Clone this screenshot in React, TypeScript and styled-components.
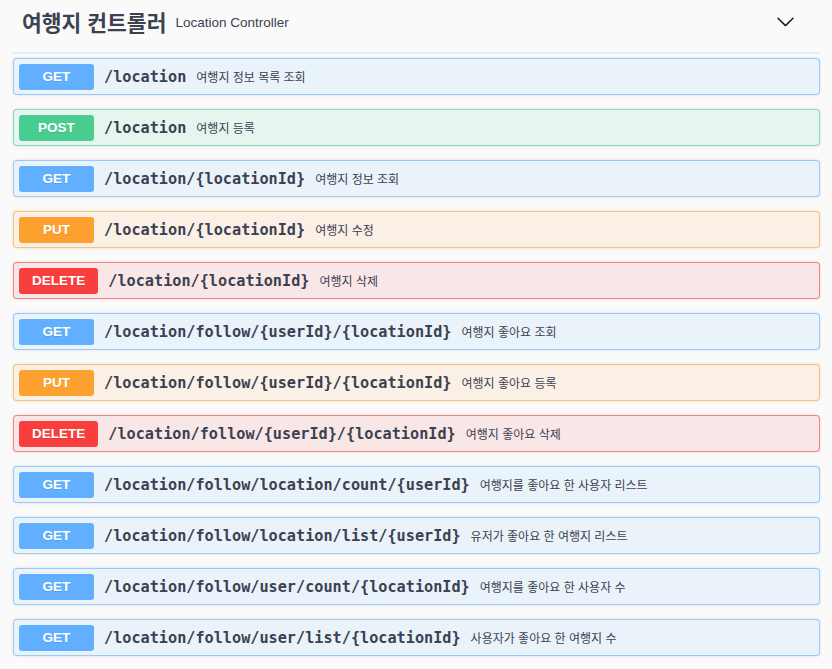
import React from "react";
import styled, { createGlobalStyle } from "styled-components";

const GlobalStyle = createGlobalStyle`
  html, body { margin: 0; padding: 0; background: #fafafa; }
  body { font-family: "Liberation Sans", "Noto Sans CJK KR", sans-serif; color: #3b4151; }
`;

type Method = "GET" | "POST" | "PUT" | "DELETE";

const COLORS: Record<Method, { main: string; bg: string; border: string }> = {
  GET: { main: "#61affe", bg: "rgba(97,175,254,.1)", border: "rgba(97,175,254,.6)" },
  POST: { main: "#49cc90", bg: "rgba(73,204,144,.1)", border: "rgba(73,204,144,.6)" },
  PUT: { main: "#fca130", bg: "rgba(252,161,48,.1)", border: "rgba(252,161,48,.6)" },
  DELETE: { main: "#f93e3e", bg: "rgba(249,62,62,.1)", border: "rgba(249,62,62,.6)" },
};

const Wrapper = styled.div`
  padding: 0 12px 0 13px;
`;

const TagHeader = styled.div`
  display: flex;
  align-items: center;
  box-sizing: border-box;
  height: 54px;
  padding: 0 25px 10px 9px;
  border-bottom: 2px solid #ebebeb;
  margin-bottom: 4px;
`;

const Title = styled.span`
  font-size: 21.5px;
  font-weight: 700;
  color: #3b4151;
`;

const Subtitle = styled.span`
  font-size: 13.5px;
  margin-left: 9px;
  margin-top: 3px;
  color: #3b4151;
`;

const Chevron = styled.svg`
  margin-left: auto;
  width: 19px;
  height: 19px;
  margin-top: 1px;
`;

const OpBlock = styled.div<{ $m: Method }>`
  box-sizing: border-box;
  height: 37px;
  margin-bottom: 14px;
  border: 1px solid ${(p) => COLORS[p.$m].border};
  background: ${(p) => COLORS[p.$m].bg};
  border-radius: 4px;
  box-shadow: 0 0 3px rgba(0, 0, 0, 0.12);
  display: flex;
  align-items: center;
  padding: 0 5px;
`;

const Badge = styled.span<{ $m: Method }>`
  box-sizing: border-box;
  height: 26px;
  min-width: 75px;
  padding: 0 13px;
  border-radius: 3px;
  background: ${(p) => COLORS[p.$m].main};
  color: #fff;
  font-size: 13.5px;
  font-weight: 700;
  text-shadow: 0 1px 0 rgba(0, 0, 0, 0.1);
  display: flex;
  align-items: center;
  justify-content: center;
`;

const Path = styled.span`
  font-family: "DejaVu Sans Mono", monospace;
  font-weight: 700;
  font-size: 15.2px;
  color: #3b4151;
  margin: 0 10px;
`;

const Desc = styled.span`
  font-size: 12px;
  color: #3b4151;
`;

const ops: { m: Method; path: string; desc: string }[] = [
  { m: "GET", path: "/location", desc: "여행지 정보 목록 조회" },
  { m: "POST", path: "/location", desc: "여행지 등록" },
  { m: "GET", path: "/location/{locationId}", desc: "여행지 정보 조회" },
  { m: "PUT", path: "/location/{locationId}", desc: "여행지 수정" },
  { m: "DELETE", path: "/location/{locationId}", desc: "여행지 삭제" },
  { m: "GET", path: "/location/follow/{userId}/{locationId}", desc: "여행지 좋아요 조회" },
  { m: "PUT", path: "/location/follow/{userId}/{locationId}", desc: "여행지 좋아요 등록" },
  { m: "DELETE", path: "/location/follow/{userId}/{locationId}", desc: "여행지 좋아요 삭제" },
  { m: "GET", path: "/location/follow/location/count/{userId}", desc: "여행지를 좋아요 한 사용자 리스트" },
  { m: "GET", path: "/location/follow/location/list/{userId}", desc: "유저가 좋아요 한 여행지 리스트" },
  { m: "GET", path: "/location/follow/user/count/{locationId}", desc: "여행지를 좋아요 한 사용자 수" },
  { m: "GET", path: "/location/follow/user/list/{locationId}", desc: "사용자가 좋아요 한 여행지 수" },
];

export default function App() {
  return (
    <>
      <GlobalStyle />
      <Wrapper>
        <TagHeader>
          <Title>여행지 컨트롤러</Title>
          <Subtitle>Location Controller</Subtitle>
          <Chevron viewBox="0 0 20 20" aria-hidden="true">
            <path
              fill="#111"
              d="M17.418 6.109c.272-.268.709-.268.979 0s.271.701 0 .969l-7.908 7.83c-.27.268-.707.268-.979 0l-7.908-7.83c-.27-.268-.27-.701 0-.969.271-.268.709-.268.979 0L10 13.25l7.418-7.141z"
            />
          </Chevron>
        </TagHeader>
        {ops.map((o, i) => (
          <OpBlock key={i} $m={o.m}>
            <Badge $m={o.m}>{o.m}</Badge>
            <Path>{o.path}</Path>
            <Desc>{o.desc}</Desc>
          </OpBlock>
        ))}
      </Wrapper>
    </>
  );
}
